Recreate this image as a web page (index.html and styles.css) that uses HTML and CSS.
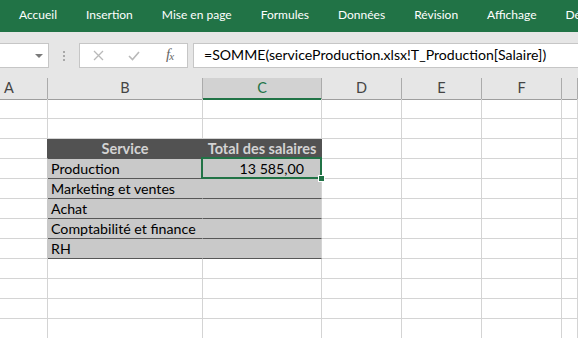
FILE: index.html
```html
<!DOCTYPE html>
<html lang="fr">
<head>
  <meta charset="UTF-8" />
  <title>Classeur - Excel</title>
  <link rel="stylesheet" href="styles.css">
</head>
<body>
  <nav class="ribbon">
    <span>Accueil</span>
    <span>Insertion</span>
    <span>Mise en page</span>
    <span>Formules</span>
    <span>Données</span>
    <span>Révision</span>
    <span>Affichage</span>
    <span>Développeur</span>
  </nav>

  <div class="formula-bar">
    <div class="name-box"><span class="arrow"></span></div>
    <div class="grip"><i></i><i></i><i></i></div>
    <div class="fx-buttons">
      <svg width="11" height="11" viewBox="0 0 11 11" aria-hidden="true">
        <path d="M1 1 L10 10 M10 1 L1 10" stroke="#b9b9b9" stroke-width="1.3" fill="none"/>
      </svg>
      <svg width="12" height="10" viewBox="0 0 12 10" aria-hidden="true">
        <path d="M1 5 L4.5 8.5 L11 1" stroke="#b9b9b9" stroke-width="1.6" fill="none"/>
      </svg>
      <span class="fx">f<sub>x</sub></span>
    </div>
    <div class="formula">=SOMME(serviceProduction.xlsx!T_Production[Salaire])</div>
  </div>

  <div class="sheet">
    <div class="row head">
      <div class="cell col-a">A</div>
      <div class="cell">B</div>
      <div class="cell active">C</div>
      <div class="cell">D</div>
      <div class="cell">E</div>
      <div class="cell">F</div>
      <div class="cell"></div>
    </div>
    <div class="row"><div class="cell"></div><div class="cell"></div><div class="cell"></div><div class="cell"></div><div class="cell"></div><div class="cell"></div><div class="cell"></div></div>
    <div class="row"><div class="cell"></div><div class="cell"></div><div class="cell"></div><div class="cell"></div><div class="cell"></div><div class="cell"></div><div class="cell"></div></div>

    <!-- tableau T_Services -->
    <div class="row">
      <div class="cell edge-h"></div>
      <div class="cell th">Service</div>
      <div class="cell th">Total des salaires</div>
      <div class="cell"></div><div class="cell"></div><div class="cell"></div><div class="cell"></div>
    </div>
    <div class="row">
      <div class="cell edge-b"></div>
      <div class="cell td">Production</div>
      <div class="cell td num selected">13 585,00</div>
      <div class="cell"></div><div class="cell"></div><div class="cell"></div><div class="cell"></div>
    </div>
    <div class="row">
      <div class="cell edge-b"></div>
      <div class="cell td">Marketing et ventes</div>
      <div class="cell td"></div>
      <div class="cell"></div><div class="cell"></div><div class="cell"></div><div class="cell"></div>
    </div>
    <div class="row">
      <div class="cell edge-b"></div>
      <div class="cell td">Achat</div>
      <div class="cell td"></div>
      <div class="cell"></div><div class="cell"></div><div class="cell"></div><div class="cell"></div>
    </div>
    <div class="row">
      <div class="cell edge-b"></div>
      <div class="cell td">Comptabilité et finance</div>
      <div class="cell td"></div>
      <div class="cell"></div><div class="cell"></div><div class="cell"></div><div class="cell"></div>
    </div>
    <div class="row">
      <div class="cell edge-b"></div>
      <div class="cell td">RH</div>
      <div class="cell td"></div>
      <div class="cell"></div><div class="cell"></div><div class="cell"></div><div class="cell"></div>
    </div>

    <div class="row"><div class="cell"></div><div class="cell"></div><div class="cell"></div><div class="cell"></div><div class="cell"></div><div class="cell"></div><div class="cell"></div></div>
    <div class="row"><div class="cell"></div><div class="cell"></div><div class="cell"></div><div class="cell"></div><div class="cell"></div><div class="cell"></div><div class="cell"></div></div>
    <div class="row"><div class="cell"></div><div class="cell"></div><div class="cell"></div><div class="cell"></div><div class="cell"></div><div class="cell"></div><div class="cell"></div></div>
    <div class="row"><div class="cell"></div><div class="cell"></div><div class="cell"></div><div class="cell"></div><div class="cell"></div><div class="cell"></div><div class="cell"></div></div>
  </div>
</body>
</html>
```

FILE: styles.css
```css
html, body {
  margin: 0;
  padding: 0;
  width: 578px;
  height: 338px;
  overflow: hidden;
}
*, *:before, *:after {
  box-sizing: border-box;
}

body {
  font-family: Lato, "Liberation Sans", sans-serif;
  background: #e6e6e6;
  color: #000;
}

/* Ruban */
.ribbon {
  height: 32px;
  background: #217346;
  color: #fff;
  display: flex;
  align-items: center;
  gap: 29px;
  padding-left: 19px;
  padding-bottom: 3px;
  font-family: Lato, "Noto Sans", sans-serif;
  font-size: 12px;
  white-space: nowrap;
  overflow: hidden;
}

/* Barre de formule */
.formula-bar {
  height: 46px;
  display: flex;
  align-items: flex-start;
  padding-top: 11px;
}

.name-box {
  width: 49px;
  height: 25px;
  background: #fff;
  border: 1px solid #c6c6c6;
  border-left: none;
  position: relative;
}
.name-box .arrow {
  position: absolute;
  left: 35px;
  top: 10px;
  border-left: 4px solid transparent;
  border-right: 4px solid transparent;
  border-top: 4px solid #7a7a7a;
}

.grip {
  width: 30px;
  height: 25px;
  display: flex;
  flex-direction: column;
  align-items: center;
  justify-content: center;
  gap: 2px;
}
.grip i {
  width: 2px;
  height: 2px;
  background: #a8a8a8;
}

.fx-buttons {
  width: 109px;
  height: 25px;
  background: #fff;
  border: 1px solid #c6c6c6;
  display: flex;
  align-items: center;
  padding-left: 13px;
}
.fx-buttons svg:nth-child(2) {
  margin-left: 24px;
}
.fx {
  margin-left: 26px;
  font-family: "Liberation Serif", serif;
  font-style: italic;
  font-size: 15px;
  color: #666;
  margin-top: -3px;
}
.fx sub {
  font-size: 11px;
  vertical-align: -1px;
  margin-left: -1px;
}

.formula {
  flex: 1;
  height: 25px;
  margin-left: 5px;
  background: #fff;
  border: 1px solid #c6c6c6;
  border-right: none;
  padding-left: 10px;
  font-size: 14.1px;
  line-height: 22px;
  white-space: nowrap;
  overflow: hidden;
}

/* Feuille */
.sheet {
  background: #fff;
}

.row {
  display: grid;
  grid-template-columns: 48px 155px 119px 80px 80px 80px 1fr;
  height: 20px;
}

.cell {
  border-right: 1px solid #d4d4d4;
  border-bottom: 1px solid #d4d4d4;
  font-size: 14.2px;
  line-height: 19px;
  padding: 0 3px;
  white-space: nowrap;
}

.row.head {
  height: 21px;
  background: #e6e6e6;
  color: #444;
}
.row.head .cell {
  border-right-color: #ababab;
  border-bottom-color: #9e9e9e;
  text-align: center;
  line-height: 20px;
  font-size: 14.5px;
}
.row.head .col-a {
  text-align: left;
  padding-left: 4px;
}
.row.head .active {
  background: #d2d2d2;
  color: #217346;
  border-bottom: 2px solid #217346;
}

.th {
  background: #525252;
  border-right-color: #525252;
  border-bottom-color: #525252;
  color: #d3d3d3;
  font-weight: 700;
  text-align: center;
  overflow: visible;
}
.cell.th {
  font-size: 14.5px;
}
.td {
  background: #c9c9c9;
  border-bottom-color: #575757;
}
.cell.td:nth-child(2) {
  border-right-color: #c9c9c9;
}
.num {
  text-align: right;
  padding-right: 17px;
}

.edge-h {
  border-right-color: #525252;
}
.edge-b {
  border-right-color: #c9c9c9;
}

.selected {
  position: relative;
}
.selected:after {
  content: "";
  position: absolute;
  left: -2px;
  top: -2px;
  right: -1px;
  bottom: -1px;
  border: 2px solid #217346;
}
.selected:before {
  content: "";
  position: absolute;
  right: -4px;
  bottom: -4px;
  width: 7px;
  height: 7px;
  background: #217346;
  border: 1px solid #fff;
  z-index: 1;
}
```
